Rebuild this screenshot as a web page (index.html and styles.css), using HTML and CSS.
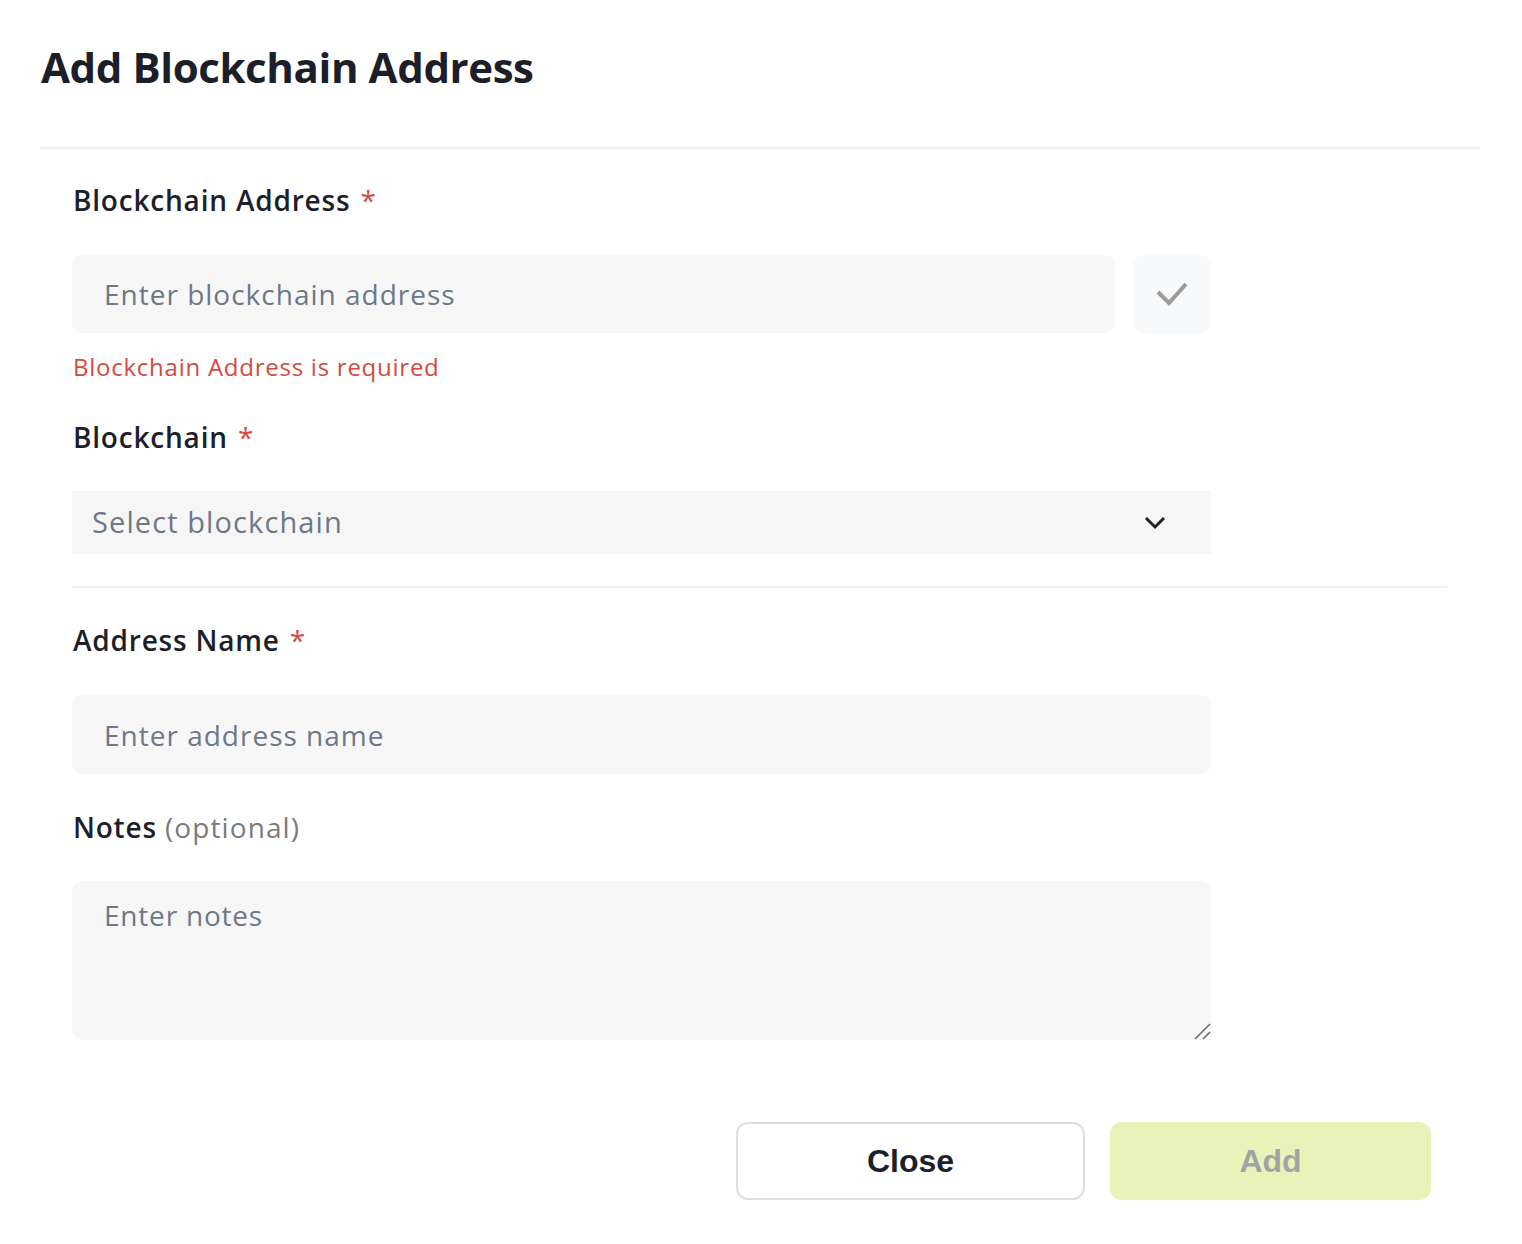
FILE: index.html
```
<!DOCTYPE html>
<html lang="en">
<head>
<meta charset="utf-8">
<title>Add Blockchain Address</title>
<link rel="stylesheet" href="styles.css">
</head>
<body>
<div class="modal">
  <header class="modal-header">
    <h1 class="modal-title">Add Blockchain Address</h1>
  </header>
  <form class="modal-body">
    <label class="field-label first">Blockchain Address <span class="req">*</span></label>
    <div class="input-row">
      <input class="text-input" type="text" placeholder="Enter blockchain address">
      <button type="button" class="check-btn" aria-label="Validate">
        <svg width="32" height="24" viewBox="0 0 32 24"><polyline points="2,10 13,21 30,2" fill="none" stroke="#9b9b9b" stroke-width="4"/></svg>
      </button>
    </div>
    <div class="error-text">Blockchain Address is required</div>
    <label class="field-label after-error">Blockchain <span class="req">*</span></label>
    <div class="select-box">
      <span class="select-placeholder">Select blockchain</span>
      <svg width="22" height="14" viewBox="0 0 22 14"><polyline points="2,2 11,11 20,2" fill="none" stroke="#1f2128" stroke-width="3"/></svg>
    </div>
    <hr class="divider">
    <label class="field-label after-divider">Address Name <span class="req">*</span></label>
    <input class="text-input full" type="text" placeholder="Enter address name">
    <label class="field-label after-input">Notes <span class="optional">(optional)</span></label>
    <div class="area-wrap">
      <textarea class="text-area" placeholder="Enter notes"></textarea>
      <svg class="resize-grip" width="18" height="18" viewBox="0 0 18 18"><line x1="2" y1="17" x2="17" y2="2" stroke="#6b6b6b" stroke-width="1.6"/><line x1="10" y1="17" x2="17" y2="10" stroke="#6b6b6b" stroke-width="1.6"/></svg>
    </div>
    <div class="modal-footer">
      <button type="button" class="btn btn-close">Close</button>
      <button type="button" class="btn btn-add">Add</button>
    </div>
  </form>
</div>
</body>
</html>
```
FILE: styles.css
```
* { box-sizing: border-box; }
html, body { margin: 0; background: #ffffff; }
body {
  font-family: "Open Sans", "DejaVu Sans", sans-serif;
  color: #1d1f2b;
}
.modal {
  width: 1522px;
  padding: 0 42px 0 40px;
}
.modal-header {
  height: 149px;
  border-bottom: 2px solid #eef0f2;
  padding-top: 43px;
}
.modal-title {
  margin: 0 0 0 1px;
  font-size: 42px;
  line-height: 48px;
  font-weight: 700;
  color: #1c1e2a;
  letter-spacing: -0.4px;
}
.modal-body {
  padding: 0 33px 0 32px;
  display: flex;
  flex-direction: column;
}
.field-label {
  display: block;
  height: 56px;
  line-height: 56px;
  font-size: 28px;
  font-weight: 600;
  color: #1d1f2b;
  margin-left: 1px;
  letter-spacing: 0.8px;
}
.field-label.first { margin-top: 23px; }
.field-label.after-error { margin-top: 25px; }
.field-label.after-divider { margin-top: 24px; }
.field-label.after-input { margin-top: 25px; }
.req { color: #d24b40; margin-left: 2px; font-weight: 500; }
.optional { color: #7b7b7b; font-weight: 400; letter-spacing: 1.1px; }
.input-row {
  display: flex;
  gap: 18px;
  margin-top: 27px;
  width: 1139px;
}
.text-input {
  flex: 1;
  height: 78px;
  border: none;
  outline: none;
  border-radius: 10px;
  background: #f7f7f7;
  padding: 0 32px;
  font-family: inherit;
  font-size: 28px;
  letter-spacing: 1px;
  color: #1d1f2b;
}
.text-input::placeholder, .text-area::placeholder { color: #6d7889; opacity: 1; }
.text-input.full {
  flex: none;
  width: 1139px;
  height: 79px;
  margin-top: 27px;
}
.check-btn {
  width: 78px;
  height: 78px;
  border: none;
  border-radius: 10px;
  background: #f8f9fa;
  display: flex;
  align-items: center;
  justify-content: center;
  padding: 0;
}
.error-text {
  margin-top: 17px;
  height: 34px;
  line-height: 34px;
  font-size: 24px;
  letter-spacing: 0.75px;
  color: #d24b40;
  margin-left: 1px;
}
.select-box {
  margin-top: 26px;
  width: 1139px;
  height: 63px;
  background: #f6f6f6;
  display: flex;
  align-items: center;
  justify-content: space-between;
  padding: 0 45px 0 20px;
}
.select-placeholder {
  font-size: 29px;
  letter-spacing: 1.1px;
  color: #6d7889;
  margin-top: -3px;
}
.divider {
  margin: 32px 0 0;
  border: none;
  height: 2px;
  background: #eef0f2;
  width: 1375px;
}
.area-wrap {
  position: relative;
  margin-top: 26px;
  width: 1139px;
  height: 159px;
}
.text-area {
  display: block;
  width: 100%;
  height: 100%;
  border: none;
  outline: none;
  border-radius: 10px;
  background: #f7f7f7;
  padding: 14px 32px;
  font-family: inherit;
  font-size: 28px;
  letter-spacing: 0.8px;
  line-height: 40px;
  resize: none;
  color: #1d1f2b;
}
.resize-grip {
  position: absolute;
  right: 0;
  bottom: 0;
}
.modal-footer {
  margin-top: 82px;
  display: flex;
  justify-content: flex-end;
  gap: 25px;
  padding-right: 16px;
}
.btn {
  height: 78px;
  border-radius: 12px;
  font-family: "Liberation Sans", Arial, sans-serif;
  font-weight: 700;
  font-size: 32px;
}
.btn-close {
  width: 349px;
  background: #ffffff;
  border: 2px solid #dedede;
  color: #1d1f2b;
}
.btn-add {
  width: 321px;
  background: #e8f2b9;
  border: none;
  color: #a3a3a3;
}
```
